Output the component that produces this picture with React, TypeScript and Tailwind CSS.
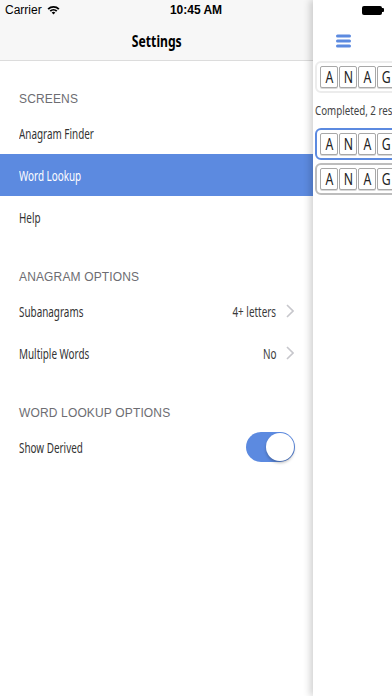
import React, { useState } from "react";

const cond = "font-['Noto_Sans','DejaVu_Sans',sans-serif]";
const helv = "font-['Liberation_Sans',Arial,sans-serif]";

const Chevron = () => (
  <svg width="8" height="14" viewBox="0 0 8 14" className="ml-[10px]">
    <polyline points="1,1 7,7 1,13" fill="none" stroke="#c7c7cc" strokeWidth="1.6" />
  </svg>
);

const SectionLabel = ({ label, first }: { label: string; first?: boolean }) => (
  <div
    className={`${first ? "h-[51px]" : "h-[52px]"} flex items-end pb-[4px] px-[19px] text-[12px] tracking-[0.15px] text-[#6d6d72] ${helv}`}>
    {label}
  </div>
);

const Row = ({
  label,
  value,
  selected,
  chevron,
}: {
  label: string;
  value?: string;
  selected?: boolean;
  chevron?: boolean;
}) => (
  <div
    className={`h-[42px] flex items-center px-[19px] text-[15px] ${cond} ${
      selected ? "bg-[#5c8ae0] text-white" : "text-[#333333]"
    }`}>
    <span className="flex-1">
      <span className="inline-block whitespace-nowrap origin-left scale-x-[0.66]">{label}</span>
    </span>
    {value && (
      <span className="inline-block whitespace-nowrap origin-right scale-x-[0.66] text-[#3a3a3a]">{value}</span>
    )}
    {chevron && <Chevron />}
  </div>
);

const Tile = ({ letter }: { letter: string }) => (
  <div
    className={`w-[18px] h-[22px] shrink-0 flex items-center justify-center bg-white border border-[#a8a8a8] rounded-[2px] shadow-[0_1px_0_rgba(0,0,0,0.15)] text-[17px] text-[#222] ${cond}`}>
    <span className="inline-block scale-x-[0.72]">{letter}</span>
  </div>
);

const TileRow = ({ border }: { border: string }) => (
  <div className={`w-max flex gap-[1px] p-[3px] border-2 rounded-[6px] ${border}`}>
    {["A", "N", "A", "G", "R", "A", "M"].map((l, i) => (
      <Tile key={i} letter={l} />
    ))}
  </div>
);

export default function App() {
  const [derived, setDerived] = useState(true);

  return (
    <div className="relative w-[392px] h-[696px] flex overflow-hidden bg-white">
      {/* status bar */}
      <div className={`absolute top-0 left-0 right-0 h-[20px] z-20 flex items-center px-[5px] text-[12px] text-black ${helv}`}>
        <span>Carrier</span>
        <svg width="13" height="10" viewBox="0 0 13 10" className="ml-[5px]">
          <path d="M0.5 3.4 A8.5 8.5 0 0 1 12.5 3.4 L11.2 4.7 A6.7 6.7 0 0 0 1.8 4.7 Z" fill="#000" />
          <path d="M2.6 5.5 A5.5 5.5 0 0 1 10.4 5.5 L9.1 6.8 A3.7 3.7 0 0 0 3.9 6.8 Z" fill="#000" />
          <path d="M4.7 7.6 A2.6 2.6 0 0 1 8.3 7.6 L6.5 9.5 Z" fill="#000" />
        </svg>
        <span className="absolute left-0 right-0 text-center font-semibold">10:45 AM</span>
        <div className="ml-auto mr-[3px] flex items-center">
          <div className="w-[20px] h-[9px] bg-black rounded-[2px]" />
          <div className="w-[2px] h-[4px] bg-black rounded-r-[1px]" />
        </div>
      </div>

      {/* settings menu */}
      <div className="w-[313px] shrink-0 flex flex-col">
        <div className="h-[61px] shrink-0 bg-[#f7f7f7] border-b border-[#dcdcdc] flex items-end justify-center pb-[7px]">
          <span className={`inline-block scale-x-[0.76] text-[16px] font-bold text-black ${cond}`}>Settings</span>
        </div>

        <SectionLabel label="SCREENS" first />
        <Row label="Anagram Finder" />
        <Row label="Word Lookup" selected />
        <Row label="Help" />

        <SectionLabel label="ANAGRAM OPTIONS" />
        <Row label="Subanagrams" value="4+ letters" chevron />
        <Row label="Multiple Words" value="No" chevron />

        <SectionLabel label="WORD LOOKUP OPTIONS" />
        <div className={`h-[42px] flex items-center pl-[19px] pr-[18px] text-[15px] text-[#333] ${cond}`}>
          <span className="flex-1">
            <span className="inline-block whitespace-nowrap origin-left scale-x-[0.66]">Show Derived</span>
          </span>
          <button
            onClick={() => setDerived(!derived)}
            className={`w-[49px] h-[30px] rounded-full p-[1px] flex items-center ${
              derived ? "bg-[#5c8ae0] justify-end" : "bg-[#e5e5ea] justify-start"
            }`}>
            <div className="w-[28px] h-[28px] rounded-full bg-white shadow-[0_2px_3px_rgba(0,0,0,0.25)]" />
          </button>
        </div>
      </div>

      {/* main screen peeking in */}
      <div className="relative z-10 flex-1 min-w-0 bg-white shadow-[-3px_0_7px_rgba(0,0,0,0.18)] overflow-hidden">
        <div className="h-[61px] pt-[20px] flex items-center pl-[23px]">
          <svg width="15" height="14" viewBox="0 0 15 14">
            <rect x="0" y="0.5" width="15" height="3" rx="1.5" fill="#5c8ae0" />
            <rect x="0" y="5.5" width="15" height="3" rx="1.5" fill="#5c8ae0" />
            <rect x="0" y="10.5" width="15" height="3" rx="1.5" fill="#5c8ae0" />
          </svg>
        </div>
        <div className="pl-[2px] flex flex-col">
          <TileRow border="border-[#ececec]" />
          <div className={`h-[35px] flex items-center text-[13px] text-[#444] ${cond}`}>
            <span className="inline-block whitespace-nowrap origin-left scale-x-[0.75]">Completed, 2 results</span>
          </div>
          <TileRow border="border-[#5c8ae0]" />
          <div className="h-[3px]" />
          <TileRow border="border-[#bdbdbd]" />
        </div>
      </div>
    </div>
  );
}
